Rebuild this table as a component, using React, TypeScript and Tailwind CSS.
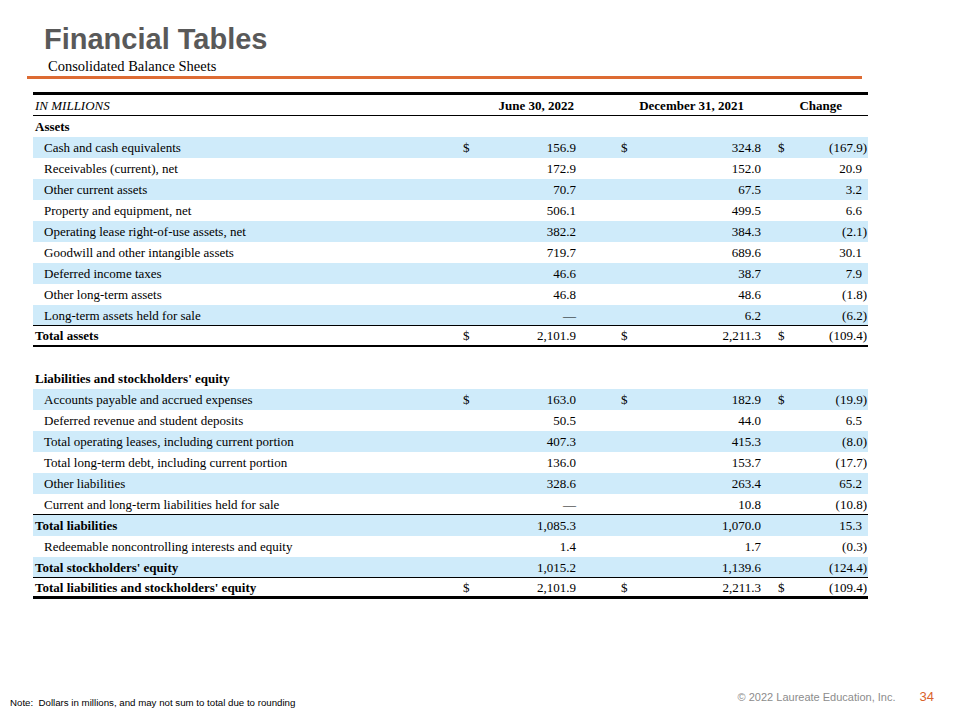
type Row = {
  label: string;
  v1?: string;
  v2?: string;
  v3?: string;
  dollar?: boolean;
  bold?: boolean;
  blue?: boolean;
  border?: "thin" | "thick" | "heavy";
};

const rows: Row[] = [
  { label: "Assets", bold: true },
  { label: "Cash and cash equivalents", v1: "156.9", v2: "324.8", v3: "(167.9)", dollar: true, blue: true },
  { label: "Receivables (current), net", v1: "172.9", v2: "152.0", v3: "20.9" },
  { label: "Other current assets", v1: "70.7", v2: "67.5", v3: "3.2", blue: true },
  { label: "Property and equipment, net", v1: "506.1", v2: "499.5", v3: "6.6" },
  { label: "Operating lease right-of-use assets, net", v1: "382.2", v2: "384.3", v3: "(2.1)", blue: true },
  { label: "Goodwill and other intangible assets", v1: "719.7", v2: "689.6", v3: "30.1" },
  { label: "Deferred income taxes", v1: "46.6", v2: "38.7", v3: "7.9", blue: true },
  { label: "Other long-term assets", v1: "46.8", v2: "48.6", v3: "(1.8)" },
  { label: "Long-term assets held for sale", v1: "—", v2: "6.2", v3: "(6.2)", blue: true, border: "thin" },
  { label: "Total assets", v1: "2,101.9", v2: "2,211.3", v3: "(109.4)", dollar: true, bold: true, border: "thick" },
  { label: "" },
  { label: "Liabilities and stockholders' equity", bold: true },
  { label: "Accounts payable and accrued expenses", v1: "163.0", v2: "182.9", v3: "(19.9)", dollar: true, blue: true },
  { label: "Deferred revenue and student deposits", v1: "50.5", v2: "44.0", v3: "6.5" },
  { label: "Total operating leases, including current portion", v1: "407.3", v2: "415.3", v3: "(8.0)", blue: true },
  { label: "Total long-term debt, including current portion", v1: "136.0", v2: "153.7", v3: "(17.7)" },
  { label: "Other liabilities", v1: "328.6", v2: "263.4", v3: "65.2", blue: true },
  { label: "Current and long-term liabilities held for sale", v1: "—", v2: "10.8", v3: "(10.8)", border: "thin" },
  { label: "Total liabilities", v1: "1,085.3", v2: "1,070.0", v3: "15.3", bold: true, blue: true },
  { label: "Redeemable noncontrolling interests and equity", v1: "1.4", v2: "1.7", v3: "(0.3)" },
  { label: "Total stockholders' equity", v1: "1,015.2", v2: "1,139.6", v3: "(124.4)", bold: true, blue: true, border: "thin" },
  { label: "Total liabilities and stockholders' equity", v1: "2,101.9", v2: "2,211.3", v3: "(109.4)", dollar: true, bold: true, border: "heavy" },
];

const grid = "grid grid-cols-[427px_40px_80px_60px_125px_30px_73px]";

function TableRow({ r }: { r: Row }) {
  const bg = r.blue ? "bg-[#cfebfa]" : "bg-white";
  const border =
    r.border === "thin"
      ? "border-b border-black"
      : r.border === "thick"
      ? "border-b-2 border-black"
      : r.border === "heavy"
      ? "border-b-[3px] border-black"
      : "";
  const paren = r.v3?.endsWith(")");
  return (
    <div className={`${grid} h-[21px] items-center ${bg} ${border}`}>
      <div className={r.bold ? "pl-[2px] font-bold" : "pl-[11px]"}>{r.label}</div>
      <div className="pl-[3px]">{r.dollar ? "$" : ""}</div>
      <div className="text-right pr-[4px]">{r.v1}</div>
      <div className="pl-[41px]">{r.dollar ? "$" : ""}</div>
      <div className="text-right pr-[4px]">{r.v2}</div>
      <div className="pl-[13px]">{r.dollar ? "$" : ""}</div>
      <div className={paren ? "text-right pr-[1px]" : "text-right pr-[6px]"}>{r.v3}</div>
    </div>
  );
}

export default function App() {
  return (
    <div className="w-[960px] h-[720px] bg-white flex flex-col overflow-hidden">
      <div className="pl-[44px] pt-[22px]">
        <h1 className="text-[29px] leading-[34px] font-bold text-[#595959] font-['Liberation_Sans',Arial,sans-serif]">
          Financial Tables
        </h1>
        <p className="pl-[4px] mt-[2px] text-[14.5px] leading-[16px] font-['Liberation_Serif','Times_New_Roman',serif] text-black">
          Consolidated Balance Sheets
        </p>
      </div>
      <div className="ml-[27px] w-[835px] h-[3px] mt-[2px] bg-[#dd6b33]" />

      <div className="ml-[33px] w-[835px] mt-[13px] text-[13px] leading-[15px] text-black font-['Liberation_Serif','Times_New_Roman',serif]">
        <div className={`${grid} h-[24px] items-center border-t-[3px] border-b border-black`}>
          <div className="pl-[2px] italic">IN MILLIONS</div>
          <div className="col-span-2 text-right pr-[6px] font-bold">June 30, 2022</div>
          <div className="col-span-2 text-right pr-[21px] font-bold">December 31, 2021</div>
          <div className="col-span-2 text-right pr-[26px] font-bold">Change</div>
        </div>
        {rows.map((r, i) => (
          <TableRow key={i} r={r} />
        ))}
      </div>

      <div className="mt-auto flex items-end justify-between pl-[10px] pr-[26px] pb-[12px] font-['Liberation_Sans',Arial,sans-serif]">
        <p className="text-[9.7px] leading-[11px] text-black">
          Note:&nbsp; Dollars in millions, and may not sum to total due to rounding
        </p>
        <div className="flex items-end gap-[24px] pb-[4px]">
          <span className="text-[11px] leading-[13px] text-[#8c8c8c]">© 2022 Laureate Education, Inc.</span>
          <span className="text-[13px] leading-[15px] text-[#d9622b]">34</span>
        </div>
      </div>
    </div>
  );
}
